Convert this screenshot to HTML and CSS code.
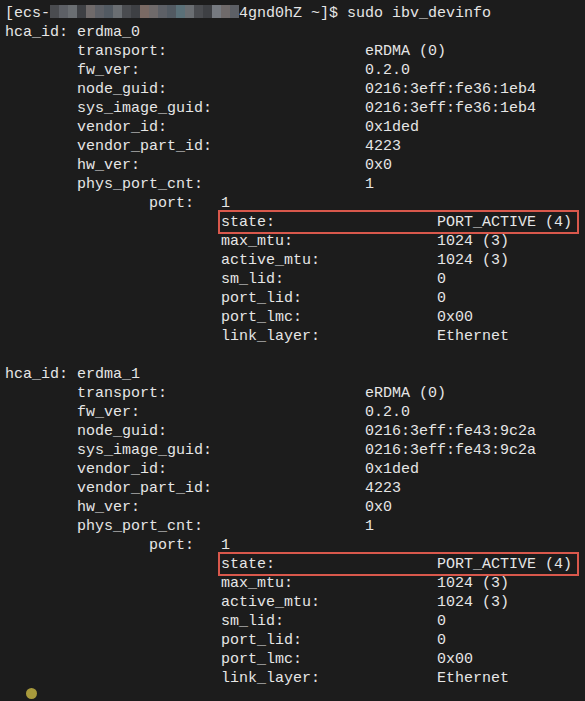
FILE: index.html
```html
<!DOCTYPE html>
<html>
<head>
<meta charset="utf-8">
<link rel="stylesheet" href="styles.css">
</head>
<body>
<div class="term">
<div class="line">[ecs-<span class="blur"><i class="b1"></i><i class="b2"></i><i class="b3"></i><i class="b4"></i><i class="b5"></i><i class="b2"></i><i class="b6"></i><i class="b3"></i><i class="b1"></i><i class="b4"></i><i class="b7"></i><i class="b5"></i><i class="b2"></i><i class="b6"></i><i class="b8"></i><i class="b3"></i><i class="b1"></i><i class="b4"></i><i class="b9"></i><i class="b5"></i><i class="b2"></i></span>4gnd0hZ ~]$ sudo ibv_devinfo</div>
<pre class="out">hca_id: erdma_0
        transport:                      eRDMA (0)
        fw_ver:                         0.2.0
        node_guid:                      0216:3eff:fe36:1eb4
        sys_image_guid:                 0216:3eff:fe36:1eb4
        vendor_id:                      0x1ded
        vendor_part_id:                 4223
        hw_ver:                         0x0
        phys_port_cnt:                  1
                port:   1
                        <span class="mark">state:                  PORT_ACTIVE (4)</span>
                        max_mtu:                1024 (3)
                        active_mtu:             1024 (3)
                        sm_lid:                 0
                        port_lid:               0
                        port_lmc:               0x00
                        link_layer:             Ethernet

hca_id: erdma_1
        transport:                      eRDMA (0)
        fw_ver:                         0.2.0
        node_guid:                      0216:3eff:fe43:9c2a
        sys_image_guid:                 0216:3eff:fe43:9c2a
        vendor_id:                      0x1ded
        vendor_part_id:                 4223
        hw_ver:                         0x0
        phys_port_cnt:                  1
                port:   1
                        <span class="mark">state:                  PORT_ACTIVE (4)</span>
                        max_mtu:                1024 (3)
                        active_mtu:             1024 (3)
                        sm_lid:                 0
                        port_lid:               0
                        port_lmc:               0x00
                        link_layer:             Ethernet</pre>
</div>
<span class="dot"></span>
</body>
</html>
```
FILE: styles.css
```css
html, body {
  margin: 0;
  padding: 0;
  background: #1c1c1c;
  width: 585px;
  height: 701px;
  overflow: hidden;
}
body {
  position: relative;
}
.term {
  padding: 4px 0 0 5px;
  font-family: "Liberation Mono", "DejaVu Sans Mono", monospace;
  font-size: 15px;
  line-height: 19px;
  color: #e6e6e6;
}
.line {
  white-space: pre;
  height: 19px;
}
.out {
  margin: 0;
  font: inherit;
  line-height: 19px;
}
.blur {
  display: inline-flex;
  width: 189px;
  height: 13px;
  vertical-align: -1px;
  overflow: hidden;
}
.blur i {
  flex: 1;
  height: 13px;
}
.b1 { background: #4a4c50; }
.b2 { background: #5d6066; }
.b3 { background: #6a6e72; }
.b4 { background: #3e4044; }
.b5 { background: #6f6a6a; }
.b6 { background: #525a62; }
.b7 { background: #7a6a64; }
.b8 { background: #5a7078; }
.b9 { background: #767a80; }
.mark {
  position: relative;
}
.mark::after {
  content: "";
  position: absolute;
  left: -3px;
  right: -7px;
  top: -4px;
  bottom: -3px;
  border: 2px solid #d9584c;
}
.dot {
  position: absolute;
  left: 26px;
  top: 688px;
  width: 11px;
  height: 11px;
  border-radius: 50%;
  background: #a89a3c;
}
```
